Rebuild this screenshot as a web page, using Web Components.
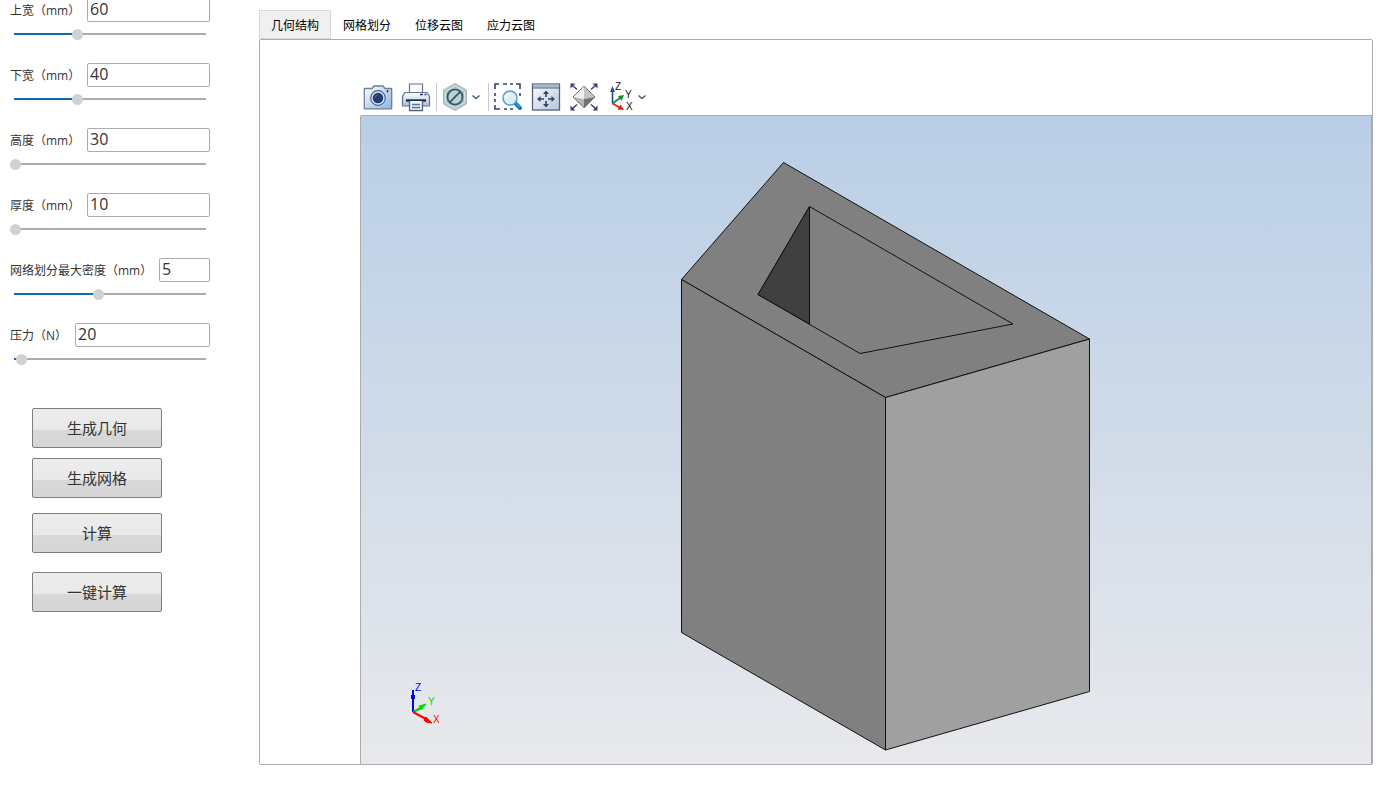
<!DOCTYPE html>
<html lang="zh-CN">
<head>
<meta charset="utf-8">
<title>几何结构</title>
<style>
body { margin: 0; background: #fff; color: #333; font-family: "Open Sans", "Noto Sans CJK SC", sans-serif; font-size: 12px; }
</style>
</head>
<body>
<fea-app></fea-app>

<template id="t-field">
<style>
:host { display: grid; gap: 6px; }
.row { display: flex; justify-content: space-between; align-items: center; height: 24px; }
label { font-size: 12px; line-height: 24px; padding-top: 2px; white-space: nowrap; color: #333; }
.value { box-sizing: border-box; width: var(--box, 123px); height: 24px; margin: 0; padding: 0 2px 2px; border: 1px solid #acacac; border-radius: 2px; background: #fff; color: #333; font: 16px "Open Sans", sans-serif; outline: none; }
.slide { appearance: none; -webkit-appearance: none; display: block; width: 100%; height: 12px; margin: 0; background: none; outline: none; }
.slide::-webkit-slider-runnable-track { height: 12px; background: linear-gradient(#0f6ab8, #0f6ab8) 4px 5px / var(--fill) 2px no-repeat, linear-gradient(#acacac, #acacac) 4px 5px / calc(100% - 8px) 2px no-repeat; }
.slide::-webkit-slider-thumb { -webkit-appearance: none; width: 11px; height: 11px; margin-top: 1px; border: 0; border-radius: 50%; background: #d2d2d2; }
</style>
<div class="row"><label for="v"><slot></slot></label><input id="v" class="value" type="text"></div>
<input class="slide" type="range" min="0" max="100" step="any">
</template>

<template id="t-button">
<style>
:host { display: block; width: 130px; }
button { display: block; box-sizing: border-box; width: 100%; height: 40px; margin: 0; padding: 0 0 2px; border: 1px solid #7f7f7f; border-radius: 2px; background: linear-gradient(#ededed, #e9e9e9 54%, #d8d8d8 54%, #d6d6d6); color: #333; font: 15px "Noto Sans CJK SC", sans-serif; }
</style>
<button type="button"><slot></slot></button>
</template>

<template id="t-tab">
<style>
:host { display: block; }
button { display: block; box-sizing: border-box; height: 29px; margin: 0; padding: 0 11px; border: 1px solid transparent; background: none; color: #000; font: 12px "Noto Sans CJK SC", sans-serif; white-space: nowrap; }
:host([selected]) button { background: #f0f0f0; border-color: #d9d9d9; }
</style>
<button type="button" role="tab"><slot></slot></button>
</template>

<template id="t-tool">
<style>
:host { display: block; }
button { display: flex; align-items: center; margin: 0; padding: 0; border: 0; background: none; }
svg { display: block; overflow: visible; }
.chev { display: none; width: 12px; height: 32px; fill: none; stroke: #4b6470; stroke-width: 1.6; }
:host([menu]) .chev { display: block; }
</style>
<button type="button"><span class="icon"></span><svg class="chev" viewBox="0 0 12 32"><path d="M.5 14.500l3.500 3 3.500-3"/></svg></button>
</template>

<template id="t-toolbar">
<style>
:host { display: flex; align-items: center; padding: 0 2px; height: 36px; }
.group { display: flex; gap: 6px; }
i { width: 1px; height: 28px; margin: 0 3px 0 4px; background: #c8c8c8; }
</style>
<div class="group"><tool-button icon="camera" label="截图"></tool-button><tool-button icon="printer" label="打印"></tool-button></div>
<i></i>
<tool-button icon="none" label="显示" menu></tool-button>
<i></i>
<div class="group"><tool-button icon="zoom" label="缩放"></tool-button><tool-button icon="fit" label="适合窗口"></tool-button><tool-button icon="extent" label="全部"></tool-button><tool-button icon="axes" label="视图" menu></tool-button></div>
</template>

<template id="t-view">
<style>
:host { display: block; position: relative; box-sizing: border-box; min-height: 300px; border: 1px solid #acacac; border-width: 1px 1px 0 1px; border-top-left-radius: 2px; background: linear-gradient(#b9cee6, #e8e9ec); }
.solid { display: block; position: absolute; inset: 0; width: 100%; height: 100%; }
.solid polygon { stroke: #111; stroke-width: 1; stroke-linejoin: round; }
.triad { position: absolute; left: 44px; bottom: 32px; width: 42px; height: 52px; }
text { font: 10px "Liberation Sans", sans-serif; }
</style>
<svg class="solid" viewBox="361 116 1010 648" preserveAspectRatio="xMidYMid meet">
<polygon points="783.5,162.5 1089.5,339 885.5,397.5 681.5,279.5" fill="#808080"/>
<polygon points="681.5,279.5 885.5,397.5 885.5,750 681.5,632.5" fill="#808080"/>
<polygon points="885.5,397.5 1089.5,339 1089.5,691.5 885.5,750" fill="#a0a0a0"/>
<polygon points="809.5,206.5 1013,324 860,353.5 758,294.5" fill="#808080"/>
<polygon points="809.5,206.5 809.5,324 758,294.5" fill="#404040"/>
</svg>
<svg class="triad" viewBox="405 680 42 52">
<path d="M413 712V690" stroke="#00f" stroke-width="2"/><path d="M411 695h4v4h-4z" fill="#00f"/>
<path d="M413 712l10-5" stroke="#0c0" stroke-width="2"/><path d="M426 704l-7 2 2 4z" fill="#0d0" stroke="#0d0"/>
<path d="M413 712l13 7" stroke="#f00" stroke-width="2"/><path d="M432 723l-6-1-2-2 2-3z" fill="#f00" stroke="#f00"/>
<text x="415" y="691" fill="#00f">Z</text><text x="428" y="705" fill="#0d0">Y</text><text x="433" y="723" fill="#f00">X</text>
</svg>
</template>

<template id="t-app">
<style>
:host { display: grid; grid-template-columns: 259px minmax(0, 1fr); min-height: 100vh; box-sizing: border-box; padding-right: 17px; overflow: hidden; }
aside { padding: 0 49px 0 10px; margin-top: -2px; }
form { display: grid; gap: 23px; }
.density { --box: 51px; }
.force { --box: 135px; }
.actions { display: grid; gap: 10px; padding: 43px 22px 0; }
.calc { margin-top: 5px; }
.all { margin-top: 9px; }
main { display: grid; grid-template-rows: 29px minmax(0, 1fr); padding: 10px 0 38px; }
nav { display: flex; }
.panel { box-sizing: border-box; display: grid; grid-template-rows: 36px minmax(0, 1fr); border: 1px solid #acacac; border-radius: 2px; padding: 39px 0 0 100px; }
</style>
<aside>
<form>
<param-field value="60" at="33">上宽（mm）</param-field>
<param-field value="40" at="33">下宽（mm）</param-field>
<param-field value="30" at="0">高度（mm）</param-field>
<param-field value="10" at="0">厚度（mm）</param-field>
<param-field class="density" value="5" at="44">网络划分最大密度（mm）</param-field>
<param-field class="force" value="20" at="3">压力（N）</param-field>
</form>
<div class="actions">
<action-button>生成几何</action-button>
<action-button>生成网格</action-button>
<action-button class="calc">计算</action-button>
<action-button class="all">一键计算</action-button>
</div>
</aside>
<main>
<nav role="tablist"><view-tab selected>几何结构</view-tab><view-tab>网格划分</view-tab><view-tab>位移云图</view-tab><view-tab>应力云图</view-tab></nav>
<section class="panel"><view-toolbar></view-toolbar><model-view></model-view></section>
</main>
</template>

<script>
const svg = body => `<svg width="32" height="32" viewBox="0 0 32 32" fill="none">${body}</svg>`;
const ICONS = {
  camera: svg(`<defs><linearGradient id="c" x2="1" y2="1"><stop stop-color="#fff"/><stop offset="1" stop-color="#8fb3dc"/></linearGradient></defs>
    <path d="M3 7.500h7l2-2.500h9l2 2.500h6q.7 0 .7.700v19q0 .7-.7.700H3q-.7 0-.7-.7v-19q0-.7.7-.7z" fill="url(#c)" stroke="#6a7fa3" stroke-width="1.300"/>
    <circle cx="16" cy="17" r="7.300" fill="#dfe9f5" stroke="#4a6390" stroke-width="1.200"/><circle cx="16" cy="17" r="5.300" fill="#1f3d70"/>
    <path d="M13 17a3 3 0 0 1 3-3" stroke="#47699b"/><path d="M25.500 9v2.500" stroke="#28395e" stroke-width="1.500"/>`),
  printer: svg(`<defs><linearGradient id="p" x2="0" y2="1"><stop stop-color="#fff"/><stop offset="1" stop-color="#a9bdd8"/></linearGradient></defs>
    <path d="M9.500 12V3h13v9" fill="#fff" stroke="#66738f" stroke-width="1.200"/>
    <path d="M5 11.500h22l2.500 4V25h-27v-9.500z" fill="url(#p)" stroke="#66738f" stroke-width="1.200"/>
    <path d="M20 13.500h3M24.500 13.500h2" stroke="#24355c" stroke-width="1.500"/><path d="M6 19.500h20" stroke="#24355c" stroke-width="2.500"/>
    <path d="M9.500 20v9.500h13V20" fill="#f4f7fb" stroke="#53617f" stroke-width="1.300"/><path d="M12 23.500h8M12 26.500h8" stroke="#5a6b8c" stroke-width="1.300"/>`),
  none: svg(`<path d="M15 2.500l11.500 6.500v14L15 29.500 3.500 23V9z" fill="#b3c8ce" stroke="#a5b9c0"/><path d="M15 5l9.500 5.500v11L15 27l-9.500-5.500v-11z" fill="#a3bec6" stroke="#dae5e8"/>
    <circle cx="15" cy="16" r="7.500" fill="#b9d0d6" stroke="#35545f" stroke-width="1.700"/><path d="M9.700 21.300l10.600-10.600" stroke="#35545f" stroke-width="1.700"/>`),
  zoom: svg(`<path d="M3 8V3h4M24 3h4v5M3 24v4h5M11 3h4M18 3h3M3 12v3M3 18v3M28 12v3M12 28h3M18 28h3" stroke="#34446c" stroke-width="1.600"/>
    <path d="M23 22l5 5" stroke="#1778b6" stroke-width="4" stroke-linecap="round"/><path d="M23 21.500l5 5" stroke="#65b5dc"/><circle cx="18" cy="17" r="7" fill="#e0ecf1" stroke="#4c9ec9" stroke-width="1.400"/>
    <path d="M14 17a4 4 0 0 1 4-4" stroke="#fff" stroke-width="1.500"/>`),
  fit: svg(`<defs><linearGradient id="f" x2="1" y2="1"><stop stop-color="#fff"/><stop offset="1" stop-color="#b4c4dd"/></linearGradient></defs>
    <rect x="2.500" y="3" width="27" height="26" fill="url(#f)" stroke="#53617f" stroke-width="1.300"/><path d="M3 3.500h26v3H3z" fill="#a8b7d0"/><path d="M3 7h26" stroke="#53617f"/>
    <path d="M16 16v-4M16 20v4M14 18H9M18 18h5" stroke="#34446c" stroke-width="1.600"/><path d="M16 9.500l3 3.500h-6zM16 26.500l3-3.500h-6zM7 18l3.500-3v6zM25 18l-3.500-3v6z" fill="#34446c"/>`),
  extent: svg(`<path d="M16 5v13L5 16z" fill="#efefef"/><path d="M16 5v13l11-2z" fill="#c4c4c4"/><path d="M5 16l11 2v9z" fill="#b5b5b5"/><path d="M27 16l-11 2v9z" fill="#747474"/><path d="M16 5l11 11-11 11L5 16z" stroke="#777"/>
    <path d="M4 4l5 4.500M28 4l-5 4.500M4 28l5-4.500M28 28l-5-4.500" stroke="#34446c" stroke-width="1.500"/><path d="M2.500 2.500h5l-5 5zM29.500 2.500h-5l5 5zM2.500 29.500v-5l5 5zM29.500 29.500v-5l-5 5z" fill="#34446c"/>`),
  axes: svg(`<path d="M6.500 22.500V9" stroke="#2448a8" stroke-width="1.600"/><path d="M6.500 5L9 11H4z" fill="#2448a8"/>
    <path d="M6.500 22.500l8-6" stroke="#16853d" stroke-width="1.600"/><path d="M18 14l-2.500 6-3.500-5z" fill="#16853d"/>
    <path d="M6.500 22.500l8 4.500" stroke="#e32020" stroke-width="1.600"/><path d="M18 29l-6.500-.5 3-5z" fill="#e32020"/>
    <g fill="#111" font-family="Liberation Sans, sans-serif" font-size="10"><text x="9" y="9">Z</text><text x="19" y="17">Y</text><text x="20" y="29">X</text></g>`)
};
class Base extends HTMLElement {
  mount(id) {
    const root = this.attachShadow({ mode: "open" });
    root.append(document.getElementById(id).content.cloneNode(true));
    return root;
  }
}
customElements.define("param-field", class extends Base {
  connectedCallback() {
    const root = this.mount("t-field");
    root.querySelector(".value").value = this.getAttribute("value");
    const slide = root.querySelector(".slide");
    slide.setAttribute("aria-label", this.textContent);
    const paint = () => slide.style.setProperty("--fill", slide.value > 0 ? `calc((100% - 8px) * ${slide.value / 100})` : "0px");
    slide.value = this.getAttribute("at");
    slide.addEventListener("input", paint);
    paint();
  }
});
customElements.define("action-button", class extends Base { connectedCallback() { this.mount("t-button"); } });
customElements.define("view-tab", class extends Base {
  connectedCallback() {
    this.mount("t-tab").querySelector("button").setAttribute("aria-selected", this.hasAttribute("selected"));
  }
});
customElements.define("tool-button", class extends Base {
  connectedCallback() {
    const root = this.mount("t-tool");
    root.querySelector("button").setAttribute("aria-label", this.getAttribute("label"));
    root.querySelector(".icon").innerHTML = ICONS[this.getAttribute("icon")];
  }
});
customElements.define("view-toolbar", class extends Base { connectedCallback() { this.mount("t-toolbar"); } });
customElements.define("model-view", class extends Base { connectedCallback() { this.mount("t-view"); } });
customElements.define("fea-app", class extends Base { connectedCallback() { this.mount("t-app"); } });
</script>
</body>
</html>
